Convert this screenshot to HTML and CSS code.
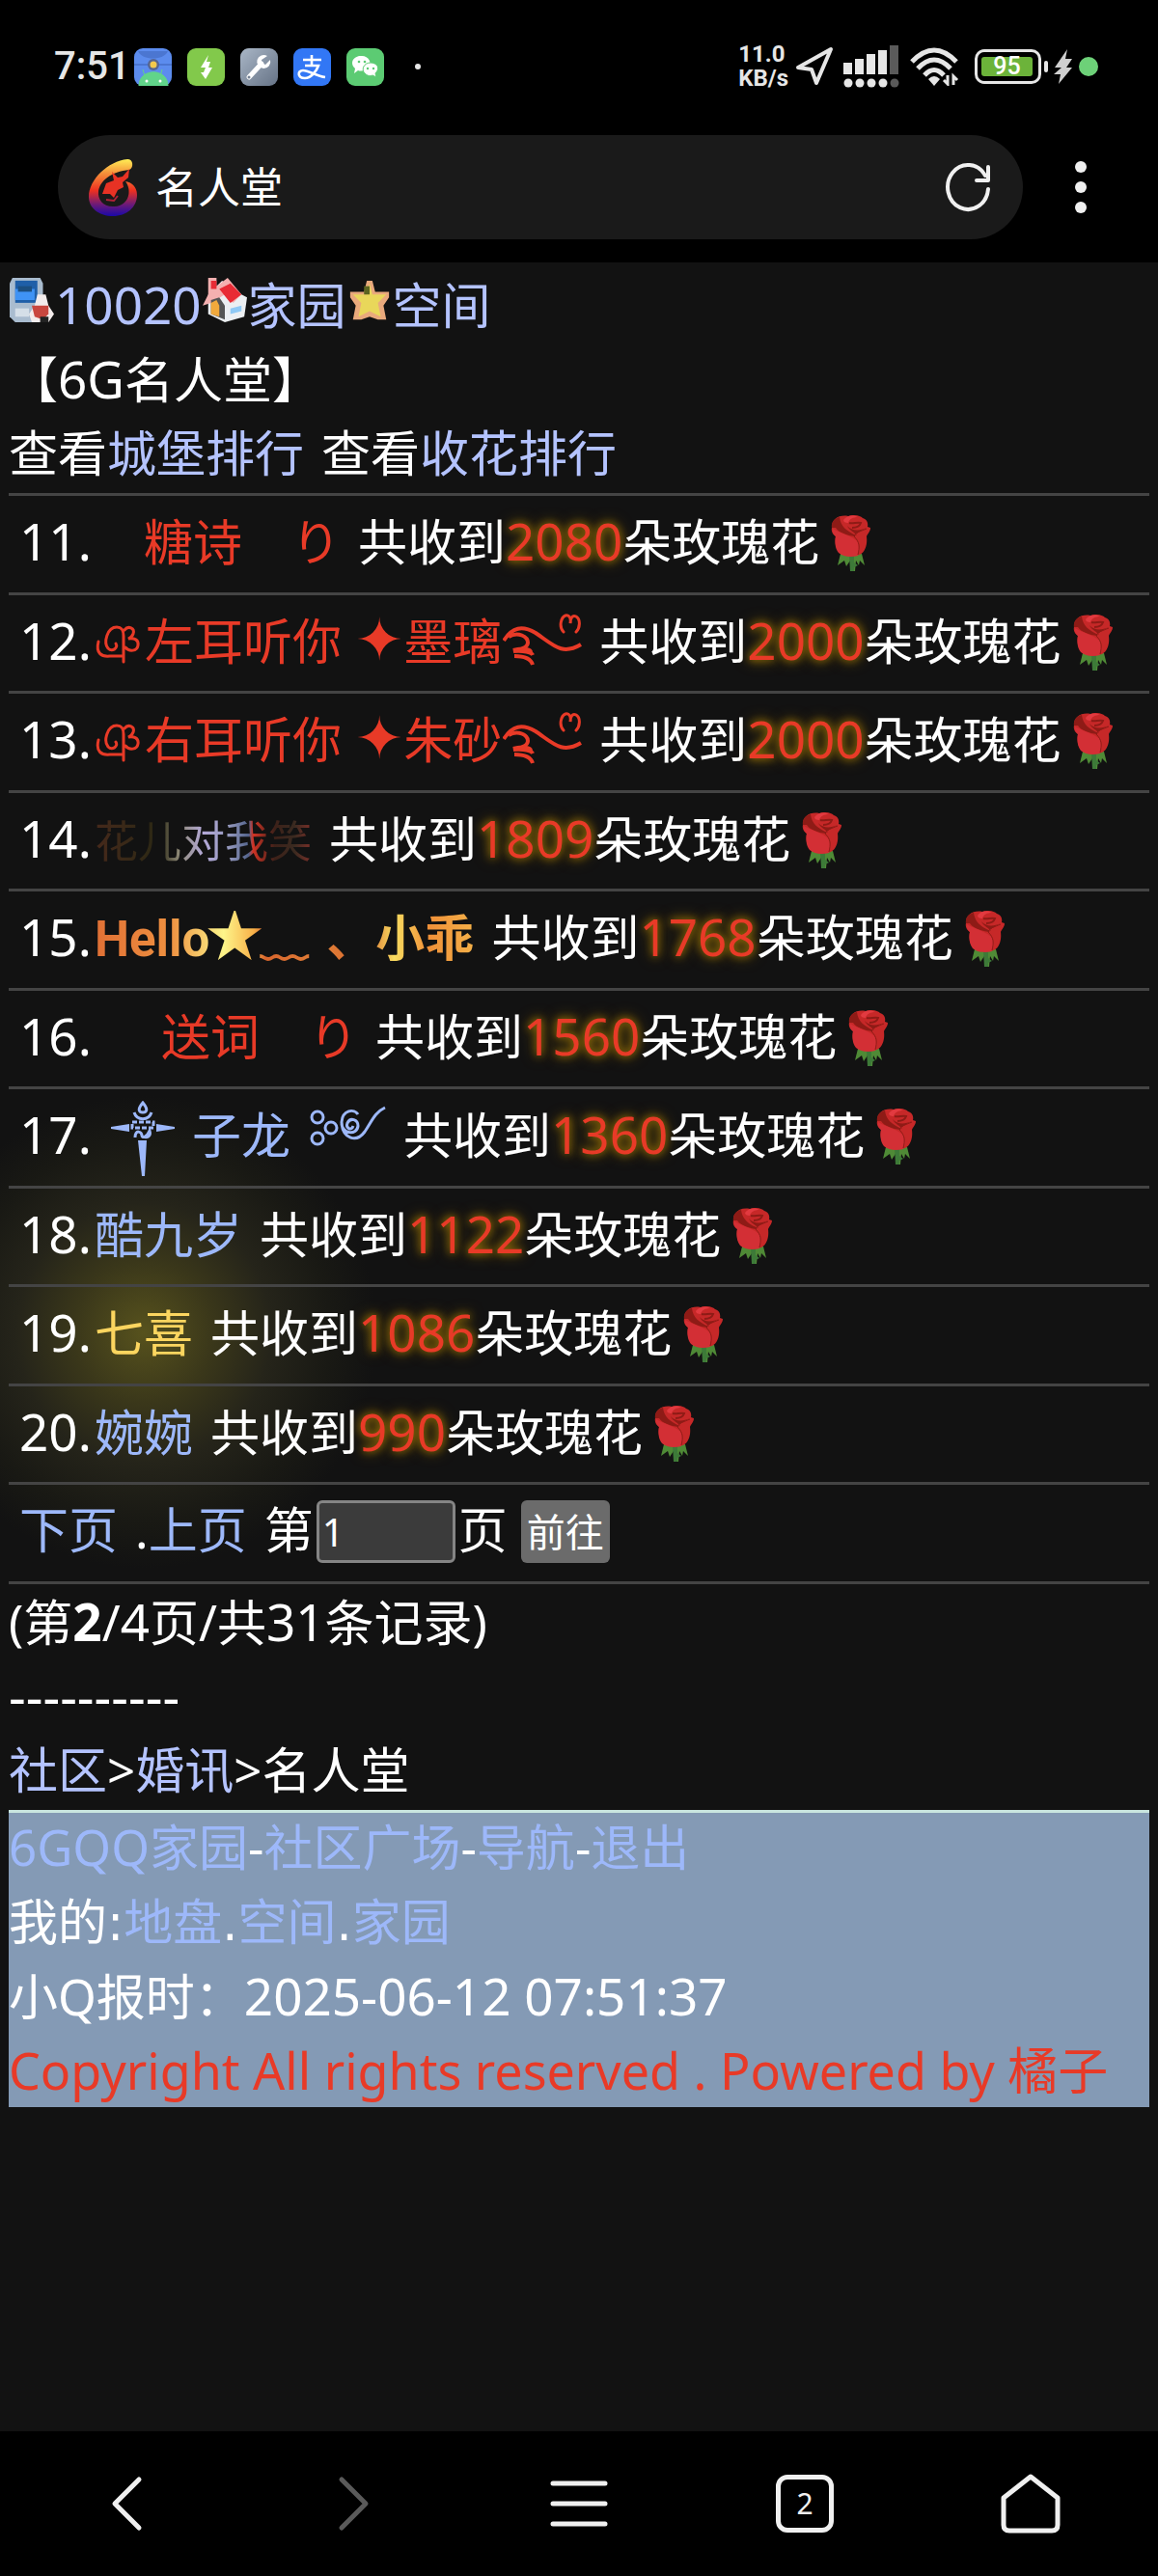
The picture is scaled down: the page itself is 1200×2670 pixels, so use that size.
FILE: index.html
```html
<!DOCTYPE html>
<html lang="zh-CN">
<head>
<meta charset="utf-8">
<title>名人堂</title>
<link rel="stylesheet" href="styles.css">
</head>
<body>
<svg class="defs" aria-hidden="true">
  <defs>
    <linearGradient id="flame" x1="0" y1="0" x2="0" y2="1">
      <stop offset="0" stop-color="#ffee55"/><stop offset=".25" stop-color="#f5903a"/>
      <stop offset=".55" stop-color="#ee3020"/><stop offset=".8" stop-color="#6a1a78"/><stop offset="1" stop-color="#1a08a8"/>
    </linearGradient>
    <linearGradient id="steel" x1="0" y1="0" x2="1" y2="1"><stop offset="0" stop-color="#a9b6c6"/><stop offset="1" stop-color="#667386"/></linearGradient>
    <symbol id="rose" viewBox="0 0 42 58">
      <path d="M10 40l-3 12 7-5 2 6 4-6 1 11h4l1-11 3 5 1-5 5 5-3-12z" fill="#4f8a36"/>
      <path d="M19 42h5v7l4 3-4 2v4h-4z" fill="#3d7a38"/>
      <path d="M1 13C0 5 8-1 18 1c5-2 12-1 15 2 4 1 6 5 5 9l3 1c0 4-3 6-4 9 1 8-1 16-7 19-8 2-16 1-21-2C4 33 4 26 5 22 2 20 0 17 1 13z" fill="#c62828"/>
      <path d="M1 13C0 7 4 3 9 2c1 9 7 15 18 19-2-3-8-5-10-10 4 5 12 6 20 2-5 3-11 5-12 9-8-1-17-4-20-9z" fill="#8e1b16"/>
      <path d="M2 14c8 5 22 8 26 14 3 6 1 10 0 14-8 2-15 1-20-3-4-5-4-12-3-17-2-2-4-4-3-8z" fill="#d32f35"/>
      <path d="M13 5c4-6 12-5 15-3-5 0-9 2-10 6-3 0-5-1-5-3z" fill="#e23a40"/>
      <path d="M22 13c5 0 8-2 9-5-4-1-8 1-12 0" fill="none" stroke="#8e1b16" stroke-width="2"/>
      <path d="M37 14c-7 3-12 4-13 8 6 6 6 11 4 19" fill="none" stroke="#8e1b16" stroke-width="1"/>
    </symbol>
    <symbol id="curl" viewBox="0 0 50 46">
      <path d="M4 21c-3 12 3 16 12 15h14M22 23c3 5-4 9-8 5-5-6-1-22 9-22 6 0 7 4 7 9v27M31 9c4-5 11-2 9 4-1 3-3 4-5 5 6-1 11 1 10 7s-9 7-13 2" fill="none" stroke="currentColor" stroke-width="3" stroke-linecap="round"/>
    </symbol>
    <symbol id="swirl" viewBox="0 0 82 54">
      <path d="M1 28C10 14 20 12 34 20c18 12 27 24 47 12" fill="none" stroke="currentColor" stroke-width="4"/>
      <path d="M6 24c10-6 20 0 20 6 0 5-8 8-15 8 9-3 18-1 18 2M11 39c10-1 19 1 20 4M12 44c9 0 17 2 19 9" fill="none" stroke="currentColor" stroke-width="4"/>
      <path d="M63 19c-5-5-3-15 2-17 4-1 6 3 5 8 0-5 2-9 6-7 5 3 4 12 0 16" fill="none" stroke="currentColor" stroke-width="3" stroke-linecap="round"/>
    </symbol>
  </defs>
</svg>

<header class="top">
  <div class="status">
    <span class="clock">7:51</span>
    <div class="apps">
      <svg class="app" viewBox="0 0 39 39"><rect width="39" height="39" rx="9" fill="#5c8cee"/><path d="M4 3h31C31 13 8 13 4 3z" fill="#4b76d1"/><path d="M0 16h39v2H0z" fill="#4b76d1"/><circle cx="20" cy="17" r="6" fill="#566590"/><circle cx="20" cy="17" r="3.5" fill="#f2c94c"/><path d="M5 39c0-19 30-19 30 0zM11 29l-2-7M27 29l2-7" fill="#61d48a" stroke="#61d48a"/><circle cx="13" cy="34" r="1.5" fill="#fff"/><circle cx="27" cy="34" r="1.5" fill="#fff"/></svg>
      <svg class="app" viewBox="0 0 39 39"><rect width="39" height="39" rx="9" fill="#82c94b"/><path d="M22 7l-8 13h5l-2 5h-3l5 7 7-12h-4l2-6h-4z" fill="#fff"/></svg>
      <svg class="app" viewBox="0 0 39 39"><rect width="39" height="39" rx="9" fill="url(#steel)"/><path d="M9 30l13-14" stroke="#fff" stroke-width="5" stroke-linecap="round"/><path d="M28 8a7 7 0 1 0 3 4l-5 5-4-2v-3z" fill="#fff"/><circle cx="9" cy="30" r="1.5" fill="#758294"/></svg>
      <svg class="app" viewBox="0 0 39 39"><rect width="39" height="39" rx="9" fill="#3277f5"/><path d="M10 12h19M19 7v11M12 18h14c-2 6-8 13-14 13-8 0-8-8-2-8s14 6 23 7" fill="none" stroke="#fff" stroke-width="2.6"/></svg>
      <svg class="app" viewBox="0 0 39 39"><rect width="39" height="39" rx="9" fill="#5ccb73"/><path d="M8 26l1-5c-7-7 0-14 7-13 7 0 11 7 7 12-4 4-8 4-11 3z" fill="#fff"/><path d="M31 30l-1-4c6-6 1-11-5-11-7 0-10 7-6 11 3 3 6 3 8 2z" fill="#fff" stroke="#5ccb73"/><g fill="#5ccb73"><circle cx="13" cy="14" r="1.3"/><circle cx="19" cy="14" r="1.3"/><circle cx="22" cy="21" r="1.2"/><circle cx="28" cy="21" r="1.2"/></g></svg>
      <span class="more-dot"></span>
    </div>
    <div class="signals">
      <span class="speed">11.0<br>KB/s</span>
      <svg width="40" height="42" viewBox="0 0 40 42"><path d="M3 22L37 3 22 38l-5-14z" fill="none" stroke="#e6e6e6" stroke-width="4" stroke-linejoin="round"/></svg>
      <svg width="58" height="46" viewBox="0 0 58 46"><g fill="#e6e6e6"><path d="M0 19h9v12H0zM12 15h9v16h-9zM24 10h9v21h-9zM36 6h9v25h-9z"/><circle cx="5" cy="40" r="4.5"/><circle cx="17" cy="40" r="4.5"/><circle cx="29" cy="40" r="4.5"/><circle cx="41" cy="40" r="4.5"/></g><g fill="#5a5a5a"><path d="M48 1h9v30h-9z"/><circle cx="53" cy="40" r="4.5"/></g></svg>
      <svg width="52" height="40" viewBox="0 0 52 40"><g fill="none" stroke="#e6e6e6" stroke-width="5"><path d="M3 15Q26-9 49 15M9 22Q26 4 43 22M16 29Q26 18 36 29"/></g><path d="M20 33q6-6 12 0l-6 7z" fill="#e6e6e6"/><path d="M36 34l4 4V29M46 39V30l4 4" fill="none" stroke="#e6e6e6" stroke-width="3"/></svg>
      <span class="battery"><span class="charge">95</span></span>
      <svg width="20" height="36" viewBox="0 0 20 36"><path d="M14 0L1 19h7L0 26h7L5 36 19 19h-6l6-9h-7z" fill="#cfcfcf"/></svg>
      <span class="live"></span>
    </div>
  </div>
  <div class="bar">
    <div class="address">
      <svg width="50" height="60" viewBox="0 0 50 60"><path d="M40 1C20 3 0 22 0 40c0 12 11 20 25 20 14 0 25-9 25-22 0-9-6-13-12-14 7 9 4 25-11 26-12 1-18-7-17-16 2-11 13-20 32-22 5-2 4-12-2-11z" fill="url(#flame)"/><path d="M14 37l4-11 8-3-2-9 6 6 5-1 7-8-1 9-6 5 1 5-6 3-4 8-4-4z" fill="#e83224"/><path d="M18 43l8 1 4-5" fill="none" stroke="#b02038" stroke-width="2"/></svg>
      <span class="page-title">名人堂</span>
      <button class="icon-btn" aria-label="刷新"><svg width="50" height="56" viewBox="0 0 50 56"><path d="M46 30a21 23 0 1 1-3-14M46 7v14H34" fill="none" stroke="#f0f0f0" stroke-width="4" stroke-linecap="round" stroke-linejoin="round"/></svg></button>
    </div>
    <button class="icon-btn" aria-label="更多"><svg width="14" height="56" viewBox="0 0 14 56"><g fill="#f0f0f0"><circle cx="7" cy="7" r="6"/><circle cx="7" cy="28" r="6"/><circle cx="7" cy="49" r="6"/></g></svg></button>
  </div>
</header>

<main class="content">
  <p class="line"><svg class="pic" viewBox="0 0 16 16"><path d="M0 2l1-2h10l1 2v11l-1 3H2l-2-2z" fill="#a9bccf"/><path d="M2 1h8v8H2z" fill="#1f5fa8"/><path d="M2 4h7v4H2z" fill="#3f93f5"/><path d="M3 3h5v2H3z" fill="#1c4f80"/><path d="M2 11h5v3H2z" fill="#d5dfe8"/><path d="M10 6h3l1 4 2 3-2 3H8l-1-3 2-3z" fill="#f3ecec"/><path d="M8 10h6v3l-2 2-3-1z" fill="#c9473f"/><path d="M11 14h3v2h-3z" fill="#222"/></svg><a class="digits" href="#">10020</a><svg class="pic" viewBox="0 0 16 16"><path d="M2 6l5-5 7 5 2 1-1 7-7 2-6-3z" fill="#eceff2"/><path d="M2 0h3v3l4-3 5 6-3 3-2-2-1-1-5 3-3 1 2-4z" fill="#f4b0b0"/><path d="M6 4l4-2 4 4-4 3zM3 1h2v3H3z" fill="#e82b35"/><path d="M3 8l3-1 2 3v5l-5-2z" fill="#555"/><path d="M3 9l2-1 1 2v4l-3-1z" fill="#f0a93c"/><path d="M10 11l4-1v2l-4 1z" fill="#8fc9f5"/></svg><a href="#">家园</a><svg class="pic" viewBox="0 0 16 16"><path d="M7 1h2l1 4h5v2l-2 3 1 5h-3l-3-1-3 1H2l1-5-2-3V5h5z" fill="#e9a97c"/><path d="M8 2l1 4h5l-3 3 1 5-4-2-4 2 1-5-3-3h5z" fill="#e9d75a"/><path d="M6 3h2v3H6z" fill="#5c6420"/></svg><a href="#">空间</a></p>
  <p class="line">【<span class="digits">6G</span>名人堂】</p>
  <p class="line">查看<a href="#">城堡排行</a><span class="gap">查看</span><a href="#">收花排行</a></p>

  <ol class="ranks">
    <li class="row"><span class="num">11.</span><span class="red">　糖诗　り</span><span class="got">共收到</span><b class="count">2080</b>朵玫瑰花<svg class="rose"><use href="#rose"/></svg></li>
    <li class="row"><span class="num">12.</span><span class="red"><svg class="curl"><use href="#curl"/></svg>左耳听你<span class="spark">✦</span>墨璃<svg class="swirl"><use href="#swirl"/></svg></span><span class="got">共收到</span><b class="count">2000</b>朵玫瑰花<svg class="rose"><use href="#rose"/></svg></li>
    <li class="row"><span class="num">13.</span><span class="red"><svg class="curl"><use href="#curl"/></svg>右耳听你<span class="spark">✦</span>朱砂<svg class="swirl"><use href="#swirl"/></svg></span><span class="got">共收到</span><b class="count">2000</b>朵玫瑰花<svg class="rose"><use href="#rose"/></svg></li>
    <li class="row"><span class="num">14.</span><span class="faded">花儿对我笑</span><span class="got">共收到</span><b class="count">1809</b>朵玫瑰花<svg class="rose"><use href="#rose"/></svg></li>
    <li class="row"><span class="num">15.</span><span class="gold">Hello<span class="star">★</span>﹏<span class="gap">、小乖</span></span><span class="got">共收到</span><b class="count">1768</b>朵玫瑰花<svg class="rose"><use href="#rose"/></svg></li>
    <li class="row"><span class="num">16.</span><span class="red gap">　送词　り</span><span class="got">共收到</span><b class="count">1560</b>朵玫瑰花<svg class="rose"><use href="#rose"/></svg></li>
    <li class="row"><span class="num">17.</span><span class="blue"><svg class="sword" viewBox="0 0 66 78"><g fill="none" stroke="currentColor" stroke-width="3"><path d="M33 2c-6 7-4 10 0 10s6-3 0-10zM24 12c3 9 15 9 18 0"/><path d="M22 22h22v6H22z" stroke-dasharray="5 2"/><path d="M25 38c0-9 7-6 7-2 0 3 5 2 8-5 2 6-3 8-7 6"/></g><path d="M0 27l19-3v8L0 29zM66 27l-19-3v8l19-3zM28 41h9l-2 37h-3z" fill="currentColor"/></svg>子龙<svg class="vine" viewBox="0 0 80 44"><g fill="none" stroke="currentColor" stroke-width="3"><circle cx="9" cy="12" r="6"/><circle cx="9" cy="34" r="6"/><circle cx="23" cy="23" r="6"/><path d="M46 21c-2 6-8 2-6-3 3-6 11-4 11 3-1 10-17 9-17-4 1-13 13-14 17-8M34 19c2 15 15 20 24 8 7-10 10-20 21-25"/></g></svg></span><span class="got">共收到</span><b class="count">1360</b>朵玫瑰花<svg class="rose"><use href="#rose"/></svg></li>
    <li class="row"><span class="num">18.</span><span class="blue">酷九岁</span><span class="got">共收到</span><b class="count">1122</b>朵玫瑰花<svg class="rose"><use href="#rose"/></svg></li>
    <li class="row"><span class="num">19.</span><span class="glow">七喜</span><span class="got">共收到</span><b class="count">1086</b>朵玫瑰花<svg class="rose"><use href="#rose"/></svg></li>
    <li class="row"><span class="num">20.</span><span class="blue">婉婉</span><span class="got">共收到</span><b class="count">990</b>朵玫瑰花<svg class="rose"><use href="#rose"/></svg></li>
    <li class="row"><a class="blue" href="#">下页</a><span class="gap">.</span><a class="blue" href="#">上页</a><label class="gap" for="page">第</label><input id="page" class="page-box" type="text" value="1">页<button class="go">前往</button></li>
  </ol>

  <p class="line">(第<b class="digits">2</b>/<span class="digits">4</span>页/共<span class="digits">31</span>条记录)</p>
  <p class="line dashes">----------</p>
  <p class="line"><a href="#">社区</a>&gt;<a href="#">婚讯</a>&gt;名人堂</p>

  <footer class="foot">
    <p class="line"><a href="#">6GQQ家园</a>-<a href="#">社区广场</a>-<a href="#">导航</a>-<a href="#">退出</a></p>
    <p class="line">我的<span class="sep">:</span><a href="#">地盘</a><span class="sep">.</span><a href="#">空间</a><span class="sep">.</span><a href="#">家园</a></p>
    <p class="line">小Q报时：<time class="clocked">2025-06-12 07:51:37</time></p>
    <p class="line red copy">Copyright All rights reserved . Powered by 橘子</p>
  </footer>
</main>

<nav class="tabs">
  <button class="tab" aria-label="后退"><svg viewBox="0 0 64 64"><path d="M44 7L19 32l25 25"/></svg></button>
  <button class="tab off" aria-label="前进"><svg viewBox="0 0 64 64"><path d="M20 7l25 25-25 25"/></svg></button>
  <button class="tab" aria-label="菜单"><svg viewBox="0 0 64 64"><path d="M5 11h54M5 32h54M5 53h54"/></svg></button>
  <button class="tab" aria-label="标签页"><span class="tab-count">2</span></button>
  <button class="tab" aria-label="主页"><svg viewBox="0 0 64 64"><path d="M4 26L32 4l28 22v28q0 6-6 6H10q-6 0-6-6z"/></svg></button>
</nav>
</body>
</html>
```
FILE: styles.css
```css
* { box-sizing: border-box; }
body {
  margin: 0;
  min-height: 100vh;
  display: flex;
  flex-direction: column;
  background: #121212;
  color: #fff;
  font-family: "Noto Sans", "Noto Sans CJK SC", sans-serif;
  font-size: 51px;
  line-height: 77px;
}
p, ol { margin: 0; padding: 0; }
a { color: #b4c3ff; text-decoration: none; }
svg { flex: none; }
button { padding: 0; border: 0; background: none; color: inherit; font: inherit; }
.defs { position: absolute; width: 0; height: 0; }

.top { height: 272px; background: #000; color: #e6e6e6; }
.status { display: flex; align-items: center; height: 140px; padding: 0 62px 2px 56px; }
.clock { width: 83px; font: 500 40px/48px Roboto, sans-serif; }
.apps { display: flex; align-items: center; gap: 16px; }
.app { width: 39px; height: 39px; }
.more-dot { width: 6px; height: 6px; margin-left: 16px; border-radius: 50%; background: #e6e6e6; }
.signals { display: flex; align-items: center; gap: 10px; margin-left: auto; }
.speed { margin-right: -3px; font: 700 24px/25px Roboto, sans-serif; }
.battery { position: relative; width: 75px; height: 36px; margin: 0 3px 0 6px; padding: 5px 4px; border: 3px solid #e6e6e6; border-radius: 10px; }
.battery { width: 69px; }
.battery::after { content: ""; position: absolute; left: 69px; top: 9px; width: 4px; height: 12px; border-radius: 2px; background: #e6e6e6; }
.charge { display: block; width: 53px; border-radius: 3px; background: #6cb33a; color: #fff; font: 500 25px/20px Roboto, sans-serif; text-align: center; }
.live { width: 20px; height: 20px; margin-left: -4px; border-radius: 50%; background: #6dd178; }

.bar { display: flex; align-items: center; gap: 53px; padding: 0 73px 0 60px; }
.address { display: flex; flex: 1; align-items: center; height: 108px; padding: 0 32px; border-radius: 54px; background: #1a1a1a; }
.page-title { flex: 1; margin-left: 19px; color: #fff; font-size: 44px; }
.icon-btn { display: flex; }

.content { flex: 1; padding: 5px 9px 0; isolation: isolate; }
.line { height: 77px; white-space: nowrap; }
.digits, .num, .count, .clocked { font-size: 53px; }
.pic { width: 46px; height: 46px; margin: 0 1px; vertical-align: 2px; }
.gap { margin-left: 18px; }
.ranks { list-style: none; margin-top: 3px; border-top: 3px solid #444; }
.row { height: 102px; padding: 8px 11px; border-bottom: 3px solid #444; white-space: nowrap; }
.row:nth-child(odd) { height: 103px; }
.num { display: inline-block; width: 78px; }
.red { color: #e83a27; }
.blue { color: #9db8fa; }
.got { margin-left: 18px; }
.count { color: #e83a27; font-weight: 400; text-shadow: 0 0 9px #a87c08, 0 0 15px #806000; }
.rose { width: 42px; height: 58px; margin-left: 12px; vertical-align: -11px; }
.curl { width: 50px; height: 46px; margin-right: 2px; vertical-align: -6px; }
.spark { margin-left: 14px; font: 60px/20px "DejaVu Sans", sans-serif; }
.swirl { width: 82px; height: 54px; margin-left: 1px; vertical-align: -6px; }
.sword { width: 66px; height: 78px; margin: -10px 18px -10px 17px; vertical-align: -13px; }
.vine { width: 80px; height: 44px; margin-left: 19px; vertical-align: 6px; }
.faded { font-size: 45px; color: transparent; background: linear-gradient(90deg, #46291b, #2b2814 30%, #8f8a78 39%, #b4a9d8 50%, #9498bd 62%, #53648c 71%, #d23324 73%, #3d2119 83%, #3a2a20 92%, #7c2f28); background-clip: text; }
.gold { font-family: Roboto, "Noto Sans CJK SC", sans-serif; font-weight: 700; color: transparent; background: linear-gradient(90deg, #e07035, #ee9040 20%, #fdf58a 34%, #f8b048 42%, #d8652d 45%, #e08038 60%, #d8652d 71%, #f8dc60 79%, #f09038 88%, #f4b048); background-clip: text; }
.star { margin: 0 -4px; font: 60px/20px "Noto Sans CJK SC", sans-serif; }
.glow { position: relative; color: #fbd55f; }
.glow::before { content: ""; position: absolute; z-index: -1; inset: -210px -190px; background: radial-gradient(closest-side, #57521d, #3a371a 30%, #25241a 55%, #191914 80%, transparent); }
.page-box { width: 144px; height: 65px; margin: -10px 3px; padding: 0 3px; border: 3px solid #858585; border-radius: 6px; background: #3b3b3b; color: #fff; font: inherit; font-size: 40px; vertical-align: 2px; }
.go { width: 92px; height: 65px; margin: -10px 0 -10px 14px; border-radius: 6px; background: #6b6b6b; color: #fff; font-size: 40px; line-height: 65px; vertical-align: 2px; }
.dashes { font-size: 55px; }

.foot { margin-top: 3px; background: #849ab5; box-shadow: inset 0 3px #c9e5df; }
.foot a { color: #9db8fa; }
.sep { font-family: "DejaVu Sans", sans-serif; }
.copy { font-size: 52px; }

.tabs { display: flex; height: 150px; padding: 0 15px; background: #000; }
.tab { flex: 1; display: flex; align-items: center; justify-content: center; color: #f0f0f0; }
.tab svg { width: 64px; height: 64px; fill: none; stroke: currentColor; stroke-width: 5; stroke-linecap: round; stroke-linejoin: round; }
.off { color: #5a5a5a; }
.tab-count { width: 60px; height: 60px; border: 5px solid #f0f0f0; border-radius: 12px; font-size: 30px; line-height: 50px; }
```
